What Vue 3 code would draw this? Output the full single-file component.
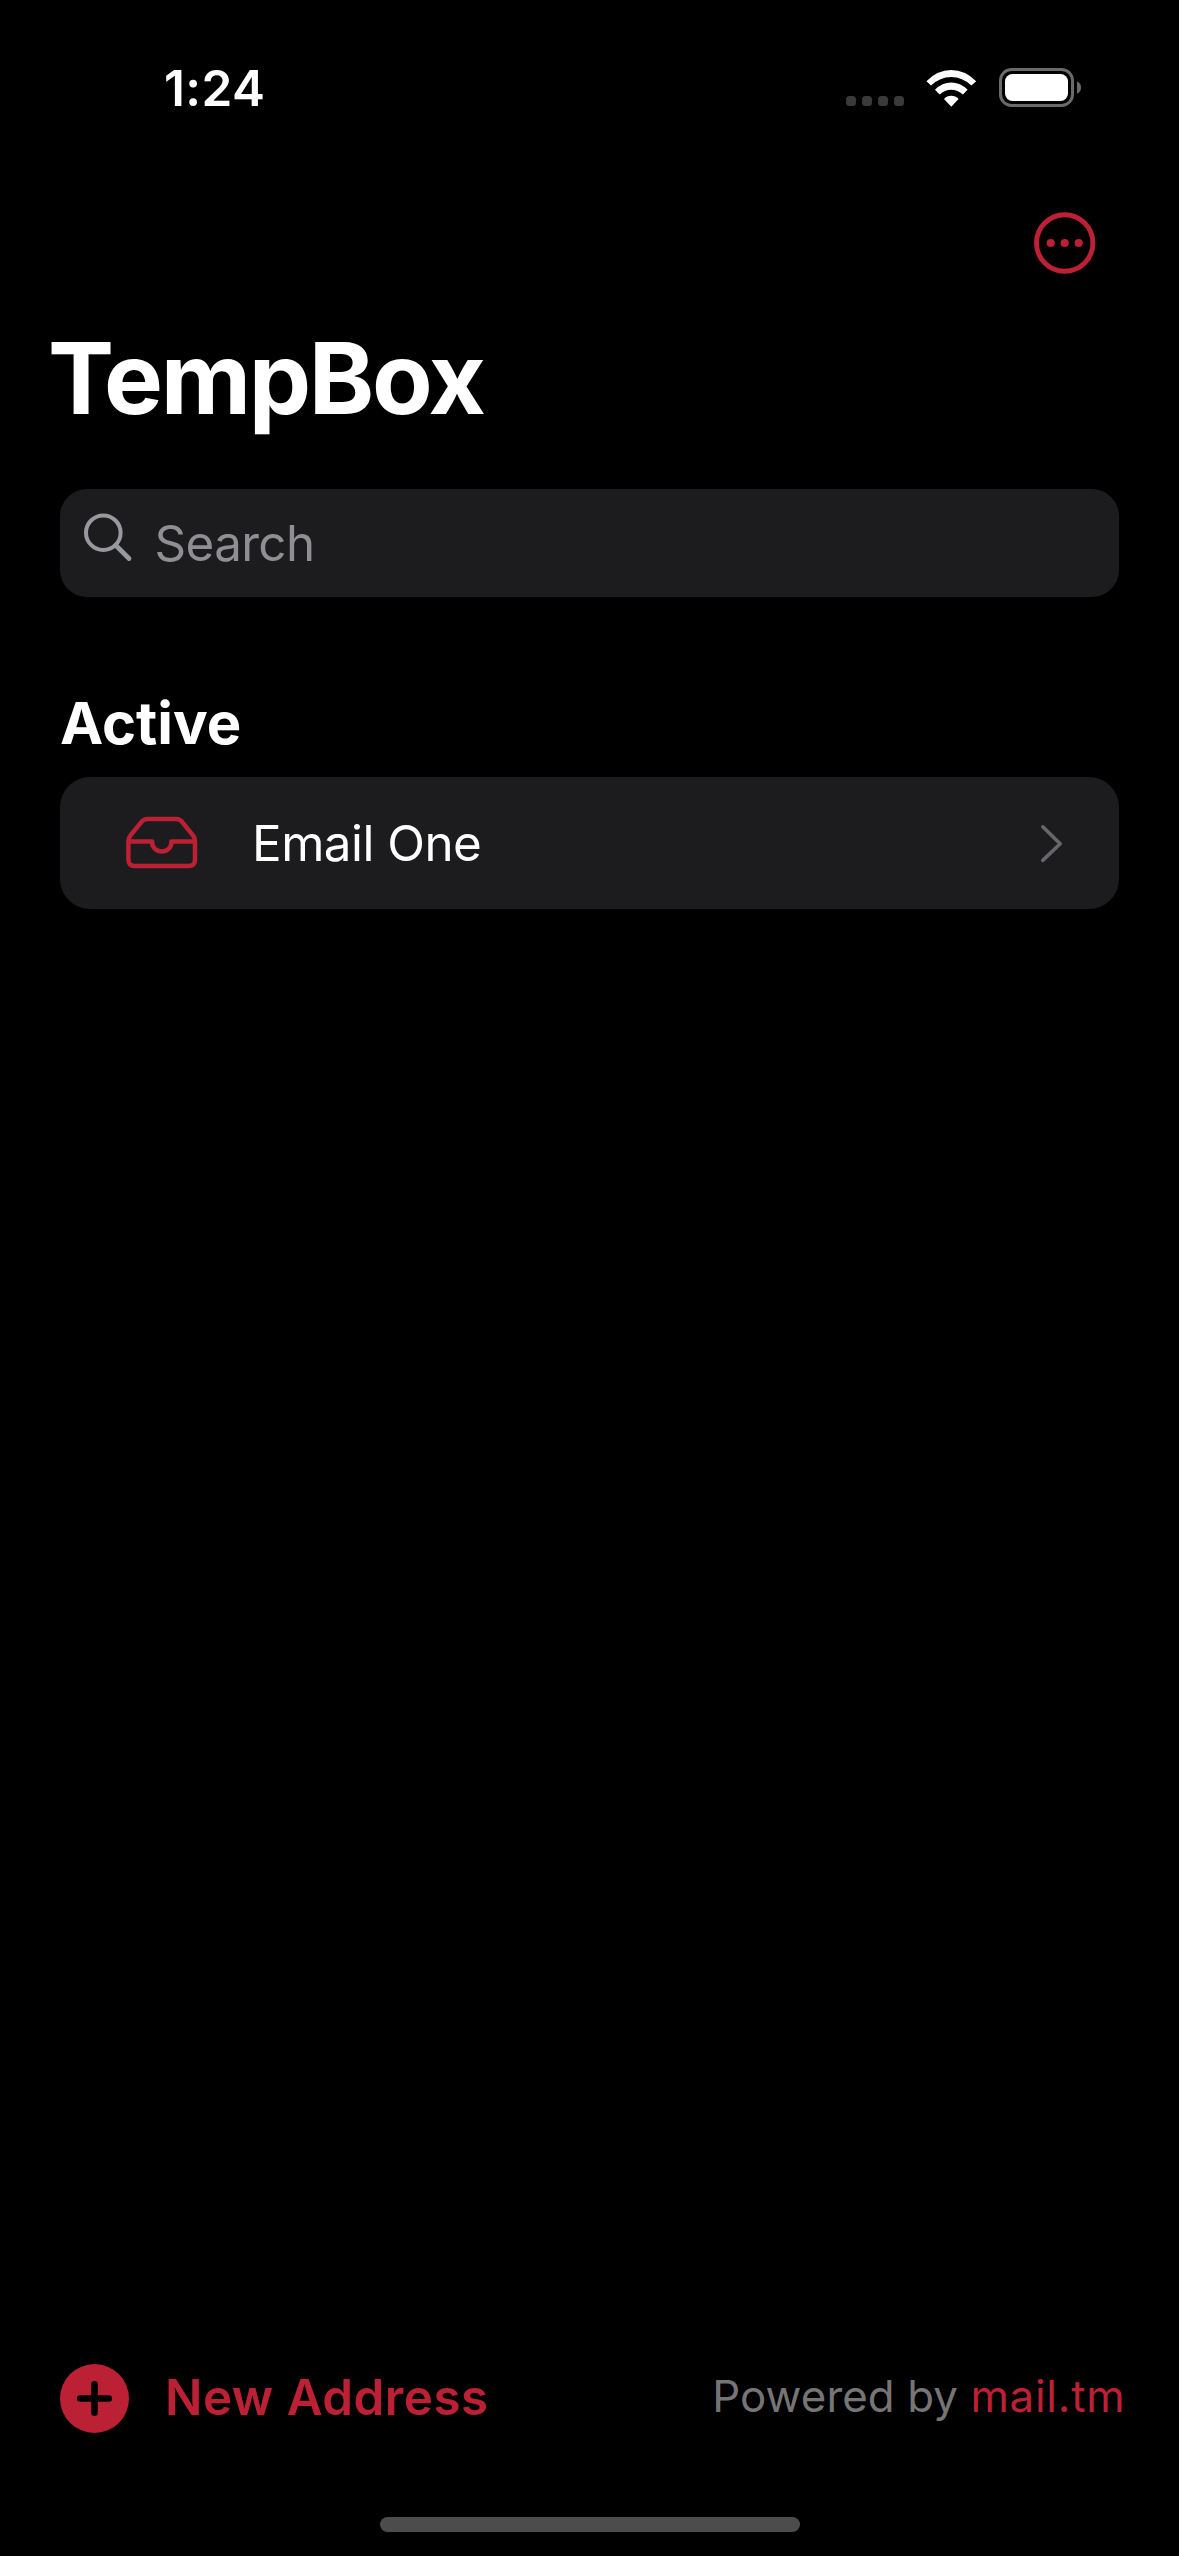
<script setup>
const addresses = [{ id: 1, name: 'Email One' }]
</script>

<template>
  <main class="screen">
    <header class="status">
      <span class="time">1:24</span>
      <div class="indicators">
        <div class="dots"><i v-for="n in 4" :key="n"></i></div>
        <svg class="wifi" width="51" height="38" viewBox="0 0 51 38">
          <path d="M0.4 12.2Q11.3 1 25.2 1T50.2 12.2L45.4 16.6Q36.5 8 25.2 8T5 16.6Z" />
          <path d="M9 20.8Q16.2 13.6 25.2 13.6T41.6 20.8L36.9 25.4Q31.7 20.7 25.2 20.7T13.7 25.4Z" />
          <path d="M18 30Q20.8 26.7 25.2 26.7T32.6 30L25.3 37.7Z" />
        </svg>
        <svg class="battery" width="83" height="40" viewBox="0 0 83 40">
          <rect x="1.5" y="1.5" width="72" height="36" rx="11" fill="none" stroke="#6a6a6a" stroke-width="3" />
          <rect x="6" y="6" width="63" height="27" rx="7.5" fill="#fff" />
          <path d="M78 13.2q4 2 4 6.3t-4 6.3z" fill="#6a6a6a" />
        </svg>
      </div>
    </header>

    <nav class="toolbar">
      <svg width="62" height="62" viewBox="0 0 62 62">
        <circle cx="30.7" cy="31" r="28.2" fill="none" stroke="#bb2035" stroke-width="5" />
        <g fill="#bb2035">
          <circle cx="16.7" cy="31" r="4.1" />
          <circle cx="30.7" cy="31" r="4.1" />
          <circle cx="44.7" cy="31" r="4.1" />
        </g>
      </svg>
    </nav>

    <h1>TempBox</h1>

    <div class="search">
      <svg width="50" height="50" viewBox="0 0 50 50" fill="none" stroke="#98989f" stroke-width="4">
        <circle cx="20.3" cy="20.7" r="17.3" />
        <path d="M32.7 33.2L46 46.5" stroke-width="4.8" stroke-linecap="round" />
      </svg>
      <span>Search</span>
    </div>

    <h2>Active</h2>

    <div v-for="a in addresses" :key="a.id" class="row">
      <svg class="tray" width="72" height="54" viewBox="0 0 72 54" fill="none" stroke="#bb2035" stroke-width="4.5" stroke-linejoin="round">
        <path d="M2.4 24.9Q2.4 21.9 4.5 19.4L15.5 5.8Q18 3 21.2 3H50.4Q53.6 3 56 5.8L67 19.4Q69 21.9 69 24.9V43.7Q69 50 62.6 50H8.8Q2.4 50 2.4 43.7Z" />
        <path d="M2.4 25.6H26.2V26.6a9.6 9 0 0 0 19.2 0V25.6H69" />
      </svg>
      <span class="name">{{ a.name }}</span>
      <svg class="chevron" width="24" height="40" viewBox="0 0 24 40" fill="none" stroke="#67676b" stroke-width="3.6" stroke-linecap="round" stroke-linejoin="round">
        <path d="M2.8 3.8L20.2 20.8L2.8 37.4" />
      </svg>
    </div>

    <footer class="footer">
      <div class="new">
        <svg width="70" height="70" viewBox="0 0 70 70">
          <circle cx="34.5" cy="34.5" r="34.5" fill="#bb2035" />
          <path d="M34.5 20.2V48.8M20.2 34.5H48.8" stroke="#000" stroke-width="6.6" stroke-linecap="round" />
        </svg>
        <span>New Address</span>
      </div>
      <p class="powered">Powered by <a>mail.tm</a></p>
    </footer>
    <div class="home"></div>
  </main>
</template>

<style>
body {
  background: #000;
}
</style>

<style scoped>
.screen {
  box-sizing: border-box;
  width: 1179px;
  height: 2556px;
  display: flex;
  flex-direction: column;
  background: #000;
  color: #fff;
  font-family: Inter, "Liberation Sans", sans-serif;
  white-space: nowrap;
  overflow: hidden;
}
svg {
  display: block;
  flex: none;
}
.status {
  height: 176px;
  display: flex;
  align-items: center;
  justify-content: space-between;
  padding: 0 97px 0 164px;
}
.time {
  font-size: 49.5px;
  line-height: 60px;
  font-weight: 600;
  letter-spacing: 0.4px;
}
.indicators {
  display: flex;
  align-items: center;
}
.dots {
  display: flex;
  gap: 6px;
  margin: 26px 22px 0 0;
}
.dots i {
  width: 10px;
  height: 10px;
  border-radius: 3.5px;
  background: #3a3a3a;
}
.wifi {
  fill: #fff;
  margin-right: 22px;
}
.toolbar {
  height: 134px;
  display: flex;
  align-items: center;
  justify-content: flex-end;
  padding-right: 83px;
}
h1 {
  margin: 8px 0 0 48px;
  font-size: 99px;
  line-height: 120px;
  font-weight: 700;
  letter-spacing: -2.3px;
}
.search {
  box-sizing: border-box;
  height: 108px;
  margin: 51px 60px 0;
  padding: 0 23px;
  display: flex;
  align-items: center;
  gap: 21.5px;
  border-radius: 27px;
  background: #1c1c1e;
  color: #8e8e93;
  font-size: 49.3px;
  letter-spacing: -0.6px;
}
.search svg {
  margin-top: -12px;
}
h2 {
  margin: 90px 0 0 60px;
  font-size: 58px;
  line-height: 72px;
  font-weight: 700;
}
.row {
  box-sizing: border-box;
  height: 132px;
  margin: 18px 60px 0;
  padding: 0 55px 0 66px;
  display: flex;
  align-items: center;
  border-radius: 30px;
  background: #1c1c1e;
  font-size: 49.3px;
  letter-spacing: -0.5px;
}
.name {
  flex: 1;
  margin-left: 54px;
}
.footer {
  margin-top: auto;
  height: 70px;
  padding: 0 53.5px 0 60px;
  display: flex;
  align-items: center;
  justify-content: space-between;
}
.new {
  display: flex;
  align-items: center;
  gap: 35px;
  color: #bb2035;
  font-size: 49.3px;
  font-weight: 600;
  letter-spacing: 0.5px;
}
.new span {
  margin-top: -4px;
}
.powered {
  margin: -5px 0 0;
  font-size: 43.8px;
  letter-spacing: 0.1px;
  color: #757575;
}
.powered a {
  color: #bb2035;
  letter-spacing: 0.8px;
}
.home {
  width: 420px;
  height: 15px;
  margin: 83px auto 24px;
  border-radius: 8px;
  background: #4c4c4c;
}
</style>
